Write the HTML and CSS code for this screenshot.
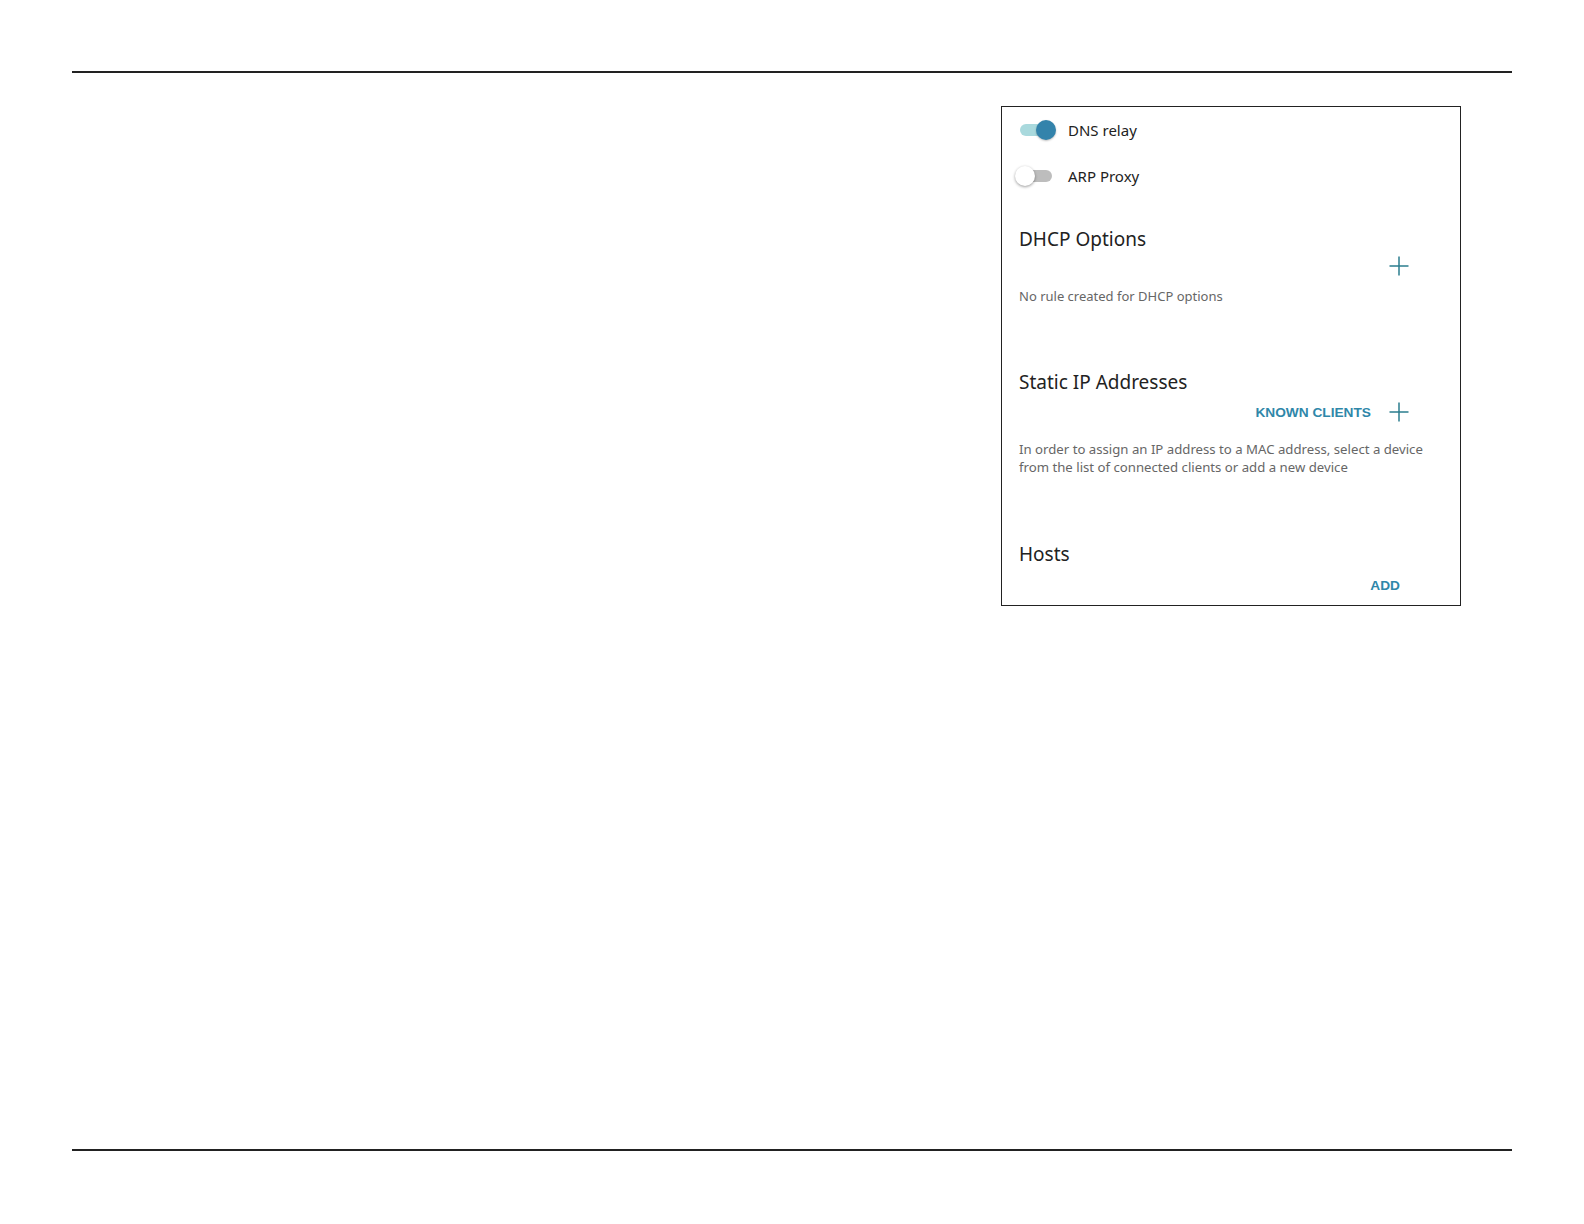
FILE: index.html
```html
<!DOCTYPE html>
<html>
<head>
  <title>LAN settings</title>
  <link rel="stylesheet" href="styles.css">
</head>
<body>
  <div class="rule rule-top"></div>

  <div class="panel">
    <div class="switch-row">
      <span class="switch on"><span class="knob"></span></span>
      <span class="switch-label">DNS relay</span>
    </div>
    <div class="switch-row">
      <span class="switch"><span class="knob"></span></span>
      <span class="switch-label">ARP Proxy</span>
    </div>

    <h2 class="section-title first">DHCP Options</h2>
    <div class="actions">
      <span class="plus">
        <svg width="24" height="24" viewBox="0 0 24 24"><path d="M12 2.5V21.5M2.5 12H21.5" stroke="#2b7d8e" stroke-width="1.5" fill="none"/></svg>
      </span>
    </div>
    <p class="note">No rule created for DHCP options</p>

    <h2 class="section-title">Static IP Addresses</h2>
    <div class="actions">
      <span class="link">KNOWN CLIENTS</span>
      <span class="plus">
        <svg width="24" height="24" viewBox="0 0 24 24"><path d="M12 2.5V21.5M2.5 12H21.5" stroke="#2b7d8e" stroke-width="1.5" fill="none"/></svg>
      </span>
    </div>
    <p class="note note-block">In order to assign an IP address to a MAC address, select a device<br>from the list of connected clients or add a new device</p>

    <h2 class="section-title hosts">Hosts</h2>
    <div class="actions">
      <span class="link add">ADD</span>
    </div>
  </div>

  <div class="rule rule-bottom"></div>
</body>
</html>
```

FILE: styles.css
```css
html {
  overflow: hidden;
}
body {
  margin: 0;
  background: #fff;
  font-family: "Noto Sans", "Open Sans", sans-serif;
  color: #333;
}
.rule {
  height: 2px;
  background: #222;
  margin-left: 72px;
  width: 1440px;
}
.rule-top {
  margin-top: 71px;
}
.rule-bottom {
  margin-top: 543px;
}
.panel {
  margin-top: 33px;
  margin-left: 1001px;
  width: 441px;
  height: 498px;
  border: 1px solid #222;
  padding: 0 0 0 17px;
}
.switch-row {
  height: 46px;
  display: flex;
  align-items: center;
}
.switch {
  position: relative;
  width: 32px;
  height: 12px;
  border-radius: 6px;
  background: #bdbdbd;
  margin-left: 1px;
}
.switch .knob {
  position: absolute;
  top: -4px;
  left: -5px;
  width: 20px;
  height: 20px;
  border-radius: 50%;
  background: #fff;
  box-shadow: 0 1px 3px rgba(0, 0, 0, 0.4);
}
.switch.on {
  background: #a9d9dd;
}
.switch.on .knob {
  left: 16px;
  background: #3383ab;
  box-shadow: 0 1px 2px rgba(0, 0, 0, 0.25);
}
.switch-label {
  margin-left: 16px;
  font-size: 15px;
  color: #222;
}
.section-title {
  margin: 63px 0 0;
  font-size: 19px;
  font-weight: normal;
  line-height: 28px;
  color: #222;
}
.section-title.first {
  margin-top: 26px;
}
.section-title.hosts {
  margin-top: 64px;
}
.actions {
  height: 28px;
  display: flex;
  align-items: center;
  justify-content: flex-end;
  padding-right: 49px;
  margin-top: 2px;
}
.section-title.first + .actions {
  margin-top: -1px;
}
.section-title.hosts + .actions {
  margin-top: 3px;
}
.plus {
  width: 24px;
  height: 24px;
  display: flex;
}
.link {
  font-family: "Liberation Sans", Arial, sans-serif;
  font-weight: bold;
  font-size: 13.7px;
  color: #2f87a9;
  margin-right: 16px;
}
.link.add {
  margin-right: 11px;
}
.note {
  margin: 7px 0 0;
  font-size: 13px;
  line-height: 18px;
  color: #666;
}
.note-block {
  margin-top: 14px;
  font-size: 13.2px;
}
```
